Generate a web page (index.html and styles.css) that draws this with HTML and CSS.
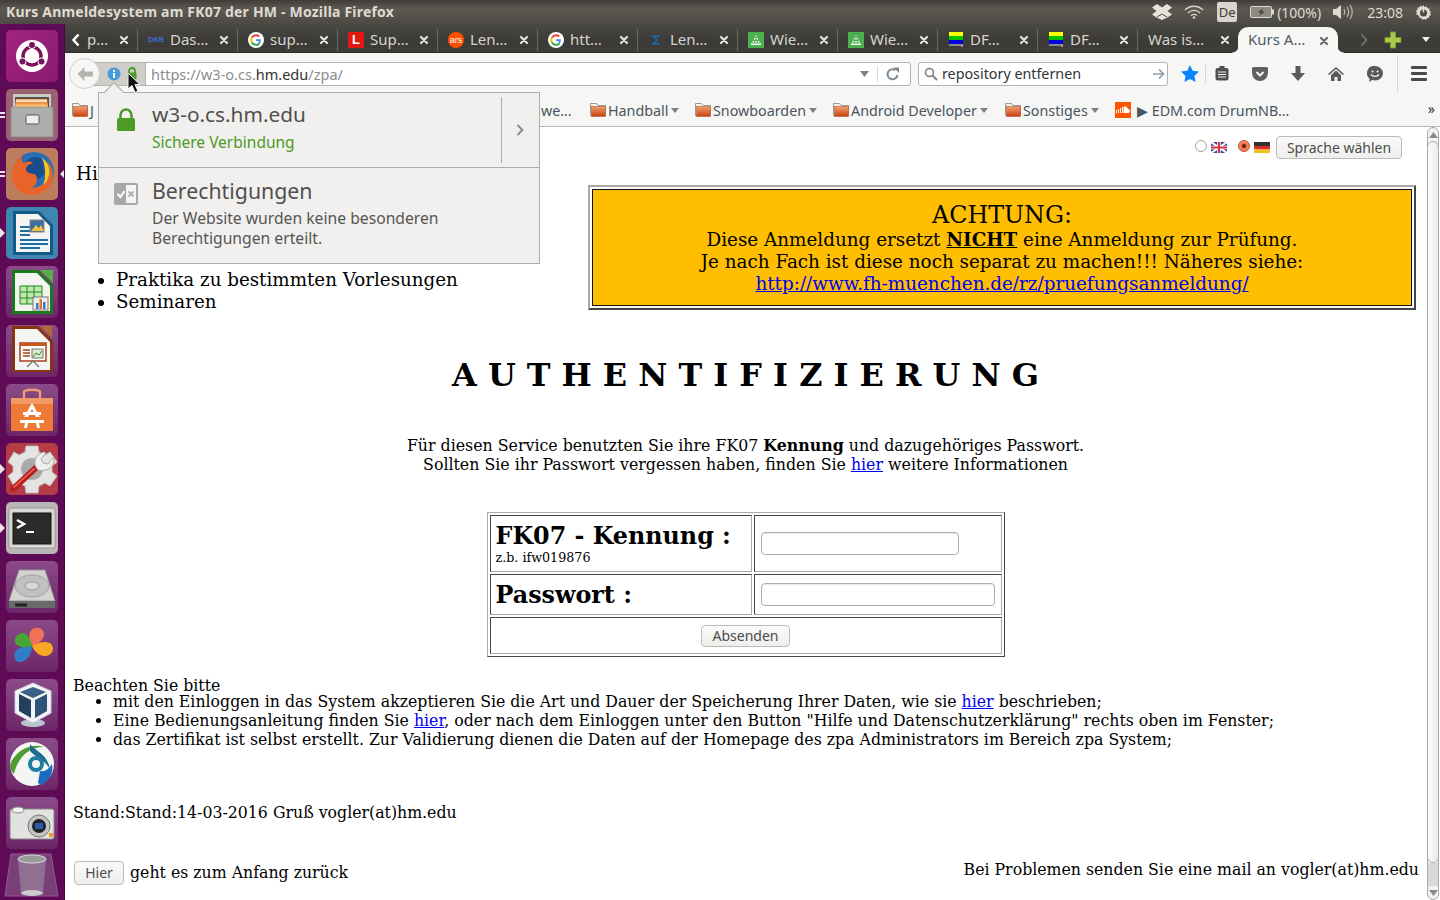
FILE: index.html
```html
<!DOCTYPE html>
<html lang="de">
<head>
<meta charset="utf-8">
<title>Kurs Anmeldesystem am FK07 der HM</title>
<link rel="stylesheet" href="styles.css">
</head>
<body>
<svg class="defs" width="0" height="0" aria-hidden="true">
  <defs>
    <linearGradient id="fold" x1="0" y1="0" x2="0" y2="1"><stop offset="0" stop-color="#f0a070"/><stop offset="1" stop-color="#c8400f"/></linearGradient>
    <symbol id="x" viewBox="0 0 10 10"><path d="M2 2l6 6M8 2l-6 6" stroke="currentColor" stroke-width="2.2" stroke-linecap="round"/></symbol>
    <symbol id="folder" viewBox="0 0 16 16"><path d="M.5 13.5v-12h6l1.5 2h7.5v10z" fill="#f4f2ee" stroke="#9a9690"/><rect x="1.5" y="4.5" width="14" height="10" fill="url(#fold)" stroke="#b8583a" stroke-width=".6"/></symbol>
    <symbol id="g" viewBox="0 0 16 16"><circle cx="8" cy="8" r="8" fill="#fff"/><path d="M8 3.2a4.8 4.8 0 0 1 3.2 1.2" fill="none" stroke="#ea4335" stroke-width="2"/><path d="M3.9 5.6A4.8 4.8 0 0 1 8 3.2" fill="none" stroke="#ea4335" stroke-width="2"/><path d="M3.9 10.4a4.8 4.8 0 0 1 0-4.8" fill="none" stroke="#fbbc05" stroke-width="2"/><path d="M11.5 11.5A4.8 4.8 0 0 1 3.9 10.4" fill="none" stroke="#34a853" stroke-width="2"/><path d="M8 7.2h4.8a4.8 4.8 0 0 1-1.3 4.3l-1.4-1.2c.5-.4.8-.9.9-1.4H8z" fill="#4285f4"/></symbol>
    <symbol id="wie" viewBox="0 0 16 16"><rect width="16" height="16" fill="#4caf50"/><path d="M8 3l1 1.500H7zM6 6h1.500v1.500H6zM8.500 6H10v1.500H8.500zM4.500 9H6v1.500H4.500zM7.200 9h1.600v1.500H7.200zM10 9h1.500v1.500H10zM3 11.500h10V13H3z" fill="#fff"/></symbol>
    <symbol id="df" viewBox="0 0 16 16"><rect x="1" y="0" width="14" height="4" fill="#ffff00"/><rect x="1" y="4" width="14" height="4" fill="#00c000"/><rect x="1" y="8" width="14" height="4" fill="#0000e0"/><rect x="1" y="12" width="14" height="2" fill="#8a8a8a"/><rect x="13" y="12" width="2" height="3" fill="#999"/></symbol>
  </defs>
</svg>

<header class="topbar">
  <span class="wintitle">Kurs Anmeldesystem am FK07 der HM - Mozilla Firefox</span>
  <div class="tray">
    <svg class="tray-dropbox" width="20" height="16" viewBox="0 0 20 16"><path d="M5 0l5 3.500L15 0l5 3.500-4.500 3.500L20 10.500 15.500 13.500 10 16l-5.500-2.500L0 10.500 4.500 7 0 3.500z" fill="#e6e3dc"/><path d="M5 13l5-3 5 3" stroke="#4d4b45" fill="none"/></svg>
    <svg class="tray-wifi" width="20" height="14" viewBox="0 0 20 14"><path d="M1 5c5-5 13-5 18 0M4 8c3.500-3.500 8.500-3.500 12 0M7 10.500c2-1.500 4-1.500 6 0" fill="none" stroke="#d8d5ce" stroke-width="1.400"/><circle cx="10" cy="12.500" r="1.300" fill="#d8d5ce"/></svg>
    <span class="kbd">De</span>
    <svg class="tray-bat" width="24" height="12" viewBox="0 0 24 12"><rect x=".5" y=".5" width="21" height="11" rx="1" fill="#8d8a80" stroke="#dcd9d2"/><rect x="22" y="3.500" width="2" height="5" fill="#dcd9d2"/><path d="M13 2L8 6.500h3.500L9 10l6-4.500h-3.500z" fill="#3a3935"/></svg>
    <span class="pct">(100%)</span>
    <svg class="tray-vol" width="20" height="16" viewBox="0 0 20 16"><path d="M0 5h3l5-4v14l-5-4H0z" fill="#dcd9d2"/><path d="M11 5c1 2 1 4 0 6M14 3c2 3 2 7 0 10M17 1c3 4 3 10 0 14" fill="none" stroke="#bdb9b1" stroke-width="1.200"/></svg>
    <span class="clock">23:08</span>
    <svg class="tray-power" width="17" height="17" viewBox="0 0 17 17"><path d="M8.500 1l1 2 2-.6 1 1.800 2 .3-.3 2 1.800 1-.9 1.900 1 1.700-1.900 1-.2 2-2 0-1 1.800-1.900-.9-1.700.9-1-1.800-2 0-.2-2L1 10.100l.9-1.700L1 6.500l1.800-1-.3-2 2 .1.900-1.800 2 .6z" fill="#dcd9d2"/><circle cx="8.500" cy="9" r="3.500" fill="#4a4842"/><path d="M8.500 3.500v5" stroke="#dcd9d2" stroke-width="1.500"/></svg>
  </div>
</header>

<div class="desktop">
  <nav class="launcher">
    <div class="tile t-ubuntu"><svg viewBox="0 0 52 52"><circle cx="26" cy="26" r="16" fill="#fff"/><circle cx="26" cy="26" r="9" fill="none" stroke="#7b145f" stroke-width="3.500"/><circle cx="26" cy="15" r="3.600" fill="#7b145f" stroke="#fff"/><circle cx="16.500" cy="31.500" r="3.600" fill="#7b145f" stroke="#fff"/><circle cx="35.500" cy="31.500" r="3.600" fill="#7b145f" stroke="#fff"/></svg></div>
    <div class="tile t-files"><i class="pip-l two"></i><svg viewBox="0 0 52 52"><path d="M7 5h38v42H7z" fill="#c9c9c6"/><path d="M5 18h42v30H5z" fill="#aeaeac" stroke="#8a8a88"/><path d="M9 8h34v10H9z" fill="#55534f"/><path d="M10 10h31l1 8H9z" fill="#f4b36a"/><path d="M10 12h31" stroke="#fff"/><path d="M9 14h33" stroke="#e8702a"/><rect x="20" y="26" width="13" height="9" rx="1.500" fill="#eee" stroke="#555"/></svg></div>
    <div class="tile t-fox"><i class="pip-l two"></i><i class="pip-r"></i><svg viewBox="0 0 52 52"><circle cx="28" cy="24" r="20" fill="#2a6fb5"/><circle cx="29" cy="20" r="11" fill="#184d8f"/><path d="M6 27c0-9 4-15 10-19-1 4 0 6 2 7 3-2 7-2 9 0-3 1-7 3-7 6 0 4 5 5 9 5 4 5 2 12-4 14 7 0 15-4 18-11 2-5 1-12-3-16 5 3 7 9 7 14 0 11-9 20-21 20S6 39 6 27z" fill="#e8642a"/><path d="M36 10c6 4 9 11 7 18-1 4-3 7-6 9 3-6 3-17-1-27z" fill="#f9c31e"/></svg></div>
    <div class="tile t-writer"><i class="pip-l"></i><svg viewBox="0 0 52 52"><path d="M7 4h26l14 14v30H7z" fill="#0f5a86"/><path d="M10 7h22l12 12v26H10z" fill="#f4f4f2"/><path d="M14 20h10M14 24h10M14 28h10" stroke="#1a6ea3" stroke-width="2"/><path d="M14 33h28M14 37h28M14 41h20" stroke="#1a6ea3" stroke-width="2"/><rect x="24" y="13" width="14" height="12" fill="#3a6ea0" stroke="#888"/><path d="M25 24l5-6 3 3 2-3 3 6z" fill="#f0c040"/></svg></div>
    <div class="tile t-dim"><svg viewBox="0 0 52 52"><path d="M34 4h13v13z" fill="#55b04a"/><path d="M6 4h26l15 15v29H6z" fill="#1a7a1a"/><path d="M9 7h22l13 13v25H9z" fill="#f4f4f2"/><path d="M14 20h22v18H14z" fill="#bfe7ae" stroke="#1a8a1a"/><path d="M14 26h22M14 32h22M21 20v18M28 20v18" stroke="#1a8a1a"/><rect x="27" y="31" width="15" height="13" fill="#eee" stroke="#777"/><rect x="30" y="37" width="2.500" height="6" fill="#3a7ac0"/><rect x="33.500" y="33" width="2.500" height="10" fill="#e8702a"/><rect x="37" y="36" width="2.500" height="7" fill="#3a7ac0"/></svg></div>
    <div class="tile t-dim"><svg viewBox="0 0 52 52"><path d="M34 1h12v12z" fill="#b06a3a"/><path d="M6 1h26l15 15v31H6z" fill="#8a3310"/><path d="M9 4h22l13 13v28H9z" fill="#f4f4f2"/><rect x="14" y="18" width="26" height="18" fill="#fff" stroke="#a0431a" stroke-width="1.500"/><rect x="14" y="18" width="26" height="3" fill="#c8581f"/><path d="M17 25h7M17 28h7M17 31h7" stroke="#a0431a" stroke-width="1.500"/><rect x="26" y="24" width="11" height="9" fill="#dce8d0" stroke="#777"/><path d="M27 32l3-4 3 2 3-4" stroke="#2a8a2a" fill="none"/><path d="M27 36l-6 6M27 36l6 6" stroke="#777" stroke-width="1.300"/></svg></div>
    <div class="tile t-dim"><svg viewBox="0 0 52 52"><path d="M18 14v-6c0-3 16-3 16 0v6" fill="none" stroke="#e8a070" stroke-width="2.500"/><path d="M5 14h42v33H5z" fill="#ee7a36"/><path d="M5 14h42v6H5z" fill="#f19a62"/><path d="M26 19l8 14h-4l-4-8-4 8h-4z" fill="#fff"/><path d="M17 28h18v3H17zM14 36h24v3H14z" fill="#fff"/><path d="M19 39l-1 5h3l1-5zM33 39l1 5h-3l-1-5z" fill="#fff"/></svg></div>
    <div class="tile t-settings"><i class="pip-l"></i><svg viewBox="0 0 52 52"><path d="M20 3h12l1 6 6 3 5-3 7 10-5 4v6l5 4-7 10-5-3-6 3-1 7H20l-1-7-6-3-5 3L2 33l5-4v-6L2 19 8 9l5 3 6-3z" fill="#e4e4e2" stroke="#bbb"/><circle cx="26" cy="26" r="11" fill="#a9a9a7"/><path d="M7 46l26-24" stroke="#b81f1f" stroke-width="6" stroke-linecap="round"/><path d="M8 44l20-18" stroke="#ea6a5a" stroke-width="1.500" stroke-linecap="round"/><path d="M30 24c-3-6 0-13 8-15l2 1-5 6 2 4 5 1 5-6 1 2c0 8-8 12-16 10z" fill="#efefed" stroke="#aaa"/></svg></div>
    <div class="tile t-term"><i class="pip-l"></i><svg viewBox="0 0 52 52"><rect x="3" y="6" width="46" height="40" rx="2" fill="#d9d9d7" stroke="#999"/><rect x="7" y="11" width="38" height="31" fill="#2b2b2b" stroke="#111"/><path d="M11 18l7 4-7 4" fill="none" stroke="#fff" stroke-width="2.500"/><path d="M20 30h8" stroke="#fff" stroke-width="2"/></svg></div>
    <div class="tile t-dim"><svg viewBox="0 0 52 52"><path d="M13 9h26l10 31H3z" fill="#d2d2d0" stroke="#999"/><ellipse cx="26" cy="25" rx="17" ry="11" fill="#c0c0be" stroke="#a2a2a0"/><ellipse cx="26" cy="25" rx="7" ry="4" fill="#d8d8d6" stroke="#999"/><path d="M3 40h46v7H3z" fill="#6a6a68"/><path d="M9 44h12" stroke="#222" stroke-width="3"/></svg></div>
    <div class="tile t-dim"><svg viewBox="0 0 52 52"><path d="M26 26C22 18 22 10 29 8c5-1 9 2 9 6 0 6-6 10-12 12z" fill="#f2715a"/><path d="M26 26c8-4 16-6 20-1 3 5-1 11-7 11-6 0-11-5-13-10z" fill="#f9a825"/><path d="M26 26c0 7-4 15-11 16-6 1-8-6-6-10 3-5 10-6 17-6z" fill="#2f7dc4"/><path d="M26 26C20 28 11 28 9 22c-1-6 4-9 8-9 5 1 8 7 9 13z" fill="#46a638"/></svg></div>
    <div class="tile t-dim"><svg viewBox="0 0 52 52"><ellipse cx="27" cy="44" rx="12" ry="4" fill="#b9c4cf"/><path d="M21 36h12v7H21z" fill="#cfd5dc"/><path d="M27 4l18 8v22l-18 10L9 34V12z" fill="#f2f4f6" stroke="#ccd"/><path d="M13 15l12 6v18l-12-7z" fill="#24405f"/><path d="M29 21l12-6v17l-12 7z" fill="#2f5378"/><path d="M27 8l13 5-13 6-13-6z" fill="#3b5f85"/></svg></div>
    <div class="tile t-dim"><svg viewBox="0 0 52 52"><circle cx="26" cy="26" r="22" fill="#f4f6f4"/><path d="M4 27C8 14 24 4 38 9 25 8 12 18 8 36c-3-3-4-6-4-9z" fill="#4f9a33"/><path d="M24 6c6 8 18 10 20 26-4-10-14-12-20-19z" fill="#1f6e8f"/><path d="M46 26c2 10-4 18-11 21l-3-2 2-12c5 1 9-2 12-7z" fill="#1a6bbd"/><circle cx="30" cy="26" r="6" fill="none" stroke="#1f7da0" stroke-width="4"/></svg></div>
    <div class="tile t-dim"><svg viewBox="0 0 52 52"><rect x="4" y="12" width="44" height="30" rx="2" fill="#e2e2e0" stroke="#888"/><ellipse cx="12" cy="13" rx="6" ry="3" fill="#f2f2f0" stroke="#888"/><circle cx="33" cy="29" r="11" fill="#c4c4c2" stroke="#777"/><circle cx="33" cy="29" r="7" fill="#222"/><rect x="29" y="26" width="8" height="6" fill="#2a5aa8"/><rect x="43" y="36" width="4" height="4" fill="#f09a20"/></svg></div>
    <div class="trash"><svg viewBox="0 0 52 50"><path d="M5 3h40l7 42H-1z" fill="#7a3f78" stroke="#8f5a8c"/><path d="M12 8h28l-3 34H15z" fill="#8f7090"/><ellipse cx="26" cy="8" rx="14" ry="4" fill="#9a9a9a" stroke="#ddd"/><ellipse cx="26" cy="42" rx="11" ry="3" fill="#ccc"/></svg></div>
  </nav>

  <div class="browser">
    <div class="tabstrip">
      <svg class="tab-arrow" width="10" height="14" viewBox="0 0 10 14"><path d="M7.500 1.500L2.500 7l5 5.500" fill="none" stroke="#fff" stroke-width="2.500"/></svg>
      <div class="tab tab-first"><span class="tt">p…</span><svg class="cl"><use href="#x"/></svg></div>
      <div class="tab"><span class="fav dkb">DKB</span><span class="tt">Das…</span><svg class="cl"><use href="#x"/></svg></div>
      <div class="tab"><svg class="fav"><use href="#g"/></svg><span class="tt">sup…</span><svg class="cl"><use href="#x"/></svg></div>
      <div class="tab"><span class="fav lfav">L</span><span class="tt">Sup…</span><svg class="cl"><use href="#x"/></svg></div>
      <div class="tab"><span class="fav ars">ars</span><span class="tt">Len…</span><svg class="cl"><use href="#x"/></svg></div>
      <div class="tab"><svg class="fav"><use href="#g"/></svg><span class="tt">htt…</span><svg class="cl"><use href="#x"/></svg></div>
      <div class="tab"><svg class="fav" viewBox="0 0 16 16"><path d="M12 4H5L9 8l-4 4h7" fill="none" stroke="#1070c0" stroke-width="1.300"/></svg><span class="tt">Len…</span><svg class="cl"><use href="#x"/></svg></div>
      <div class="tab"><svg class="fav"><use href="#wie"/></svg><span class="tt">Wie…</span><svg class="cl"><use href="#x"/></svg></div>
      <div class="tab"><svg class="fav"><use href="#wie"/></svg><span class="tt">Wie…</span><svg class="cl"><use href="#x"/></svg></div>
      <div class="tab"><svg class="fav"><use href="#df"/></svg><span class="tt">DF…</span><svg class="cl"><use href="#x"/></svg></div>
      <div class="tab"><svg class="fav"><use href="#df"/></svg><span class="tt">DF…</span><svg class="cl"><use href="#x"/></svg></div>
      <div class="tab tab-plain"><span class="tt">Was is…</span><svg class="cl"><use href="#x"/></svg></div>
      <div class="tab tab-active"><span class="tt">Kurs A…</span><svg class="cl"><use href="#x"/></svg></div>
      <svg class="strip-next" width="10" height="14" viewBox="0 0 10 14"><path d="M2.500 1.500L7.500 7l-5 5.500" fill="none" stroke="#77756e" stroke-width="1.800"/></svg>
      <svg class="strip-plus" width="18" height="18" viewBox="0 0 18 18"><path d="M6.500 1h5v5.500H17v5h-5.500V17h-5v-5.500H1v-5h5.500z" fill="#a8c850" stroke="#78982e"/></svg>
      <svg class="strip-drop" width="10" height="6" viewBox="0 0 10 6"><path d="M1 0h8L5 5z" fill="#f2f2f2"/></svg>
    </div>

    <div class="navbar">
      <button class="backbtn" aria-label="Zurück"><svg width="18" height="16" viewBox="0 0 18 16"><path d="M8.500 1L1.500 8l7 7V10.500H17v-5H8.500z" fill="#b3b3b0"/></svg></button>
      <div class="urlbar">
        <div class="identity">
          <svg width="14" height="14" viewBox="0 0 14 14"><circle cx="7" cy="7" r="6.500" fill="#4a9bdc"/><rect x="6" y="6" width="2" height="5" fill="#fff"/><rect x="6" y="3" width="2" height="2" fill="#fff"/></svg>
          <svg width="10" height="13" viewBox="0 0 10 13"><path d="M2 6V4a3 3 0 0 1 6 0v2" fill="none" stroke="#4d9a26" stroke-width="1.800"/><rect x=".5" y="5.500" width="9" height="7" rx="1" fill="#4d9a26"/></svg>
        </div>
        <span class="url"><span class="u-dim">https://w3-o.cs.</span>hm.edu<span class="u-dim">/zpa/</span></span>
        <svg class="url-drop" width="9" height="6" viewBox="0 0 9 6"><path d="M0 0h9L4.500 6z" fill="#808080"/></svg>
        <span class="url-sep"></span>
        <svg class="url-reload" width="14" height="14" viewBox="0 0 14 14"><path d="M11.500 8a5 5 0 1 1-2-4.800" fill="none" stroke="#7c8a96" stroke-width="2"/><path d="M7.500 .5h5.500v5.500z" fill="#7c8a96"/></svg>
      </div>
      <div class="searchbar">
        <svg width="14" height="14" viewBox="0 0 14 14"><circle cx="5.500" cy="5.500" r="4" fill="none" stroke="#808080" stroke-width="1.600"/><path d="M8.500 8.500l4.500 4.500" stroke="#808080" stroke-width="2"/></svg>
        <span class="s-text">repository entfernen</span>
        <svg class="s-go" width="12" height="12" viewBox="0 0 12 12"><path d="M0 6h10M6 1.500L10.500 6 6 10.500" fill="none" stroke="#8a9aa8" stroke-width="1.600"/></svg>
      </div>
      <div class="tools">
        <svg class="i-star" width="18" height="17" viewBox="0 0 18 17"><path d="M9 0l2.700 5.800 6.300.8-4.600 4.300 1.200 6.100L9 14l-5.600 3 1.200-6.100L0 6.600l6.300-.8z" fill="#0a84ff"/></svg>
        <span class="t-sep"></span>
        <svg class="i-clip" width="14" height="15" viewBox="0 0 14 15"><rect x=".5" y="2" width="13" height="12.500" rx="2" fill="#4f4f4f"/><rect x="4.500" y="0" width="5" height="3" fill="#4f4f4f"/><path d="M3 6h8M3 8.500h8M3 11h8" stroke="#f6f6f5" stroke-width="1.200"/></svg>
        <svg class="i-pocket" width="16" height="14" viewBox="0 0 16 14"><path d="M1.500 0h13A1.500 1.500 0 0 1 16 1.500V6A8 8 0 0 1 0 6V1.500A1.500 1.500 0 0 1 1.500 0z" fill="#5f5f5f"/><path d="M4.500 5l3.500 3.500L11.500 5" fill="none" stroke="#f6f6f5" stroke-width="2"/></svg>
        <svg class="i-down" width="14" height="15" viewBox="0 0 14 15"><path d="M4.500 0h5v7H14l-7 8-7-8h4.500z" fill="#5a5a5a"/></svg>
        <svg class="i-home" width="16" height="14" viewBox="0 0 16 14"><path d="M8 0l8 7-1 1-7-6-7 6-1-1z" fill="#5a5a5a"/><path d="M3 8l5-4.500L13 8v6H9.500V10h-3v4H3z" fill="#5a5a5a"/></svg>
        <svg class="i-smile" width="16" height="16" viewBox="0 0 16 16"><path d="M8 0a8 7.300 0 0 1 0 14.600c-1 0-2-.2-2.800-.5L2 16l.6-3.300A7.200 7.200 0 0 1 8 0z" fill="#5a5a5a"/><circle cx="5.500" cy="5.500" r="1" fill="#f6f6f5"/><circle cx="10.500" cy="5.500" r="1" fill="#f6f6f5"/><path d="M4 8.500c2 2.500 6 2.500 8 0" fill="none" stroke="#f6f6f5" stroke-width="1.300"/></svg>
        <span class="t-sep tall"></span>
        <span class="i-menu"><i></i><i></i><i></i></span>
      </div>
    </div>

    <div class="bookmarks">
      <span class="bm bm-j"><svg class="f16"><use href="#folder"/></svg>J</span>
      <span class="bm bm-we">we…</span>
      <span class="bm bm-hand"><svg class="f16"><use href="#folder"/></svg>Handball<i class="caret"></i></span>
      <span class="bm bm-snow"><svg class="f16"><use href="#folder"/></svg>Snowboarden<i class="caret"></i></span>
      <span class="bm bm-and"><svg class="f16"><use href="#folder"/></svg>Android Developer<i class="caret"></i></span>
      <span class="bm bm-son"><svg class="f16"><use href="#folder"/></svg>Sonstiges<i class="caret"></i></span>
      <span class="bm bm-edm"><svg width="16" height="16" viewBox="0 0 16 16"><rect width="16" height="16" fill="#ff5500"/><path d="M1.500 11V8M3.500 11V7M5.500 11V6M7.500 11V5" stroke="#fff"/><path d="M8.500 11V5c2-1 4 0 4.500 2 1.500 0 2 1 2 2s-1 2-2 2z" fill="#fff"/></svg>▶ EDM.com DrumNB…</span>
      <span class="bm-more">»</span>
    </div>

    <div class="viewport">
      <main class="page">
        <form class="lang">
          <span class="radio"></span>
          <svg class="flag" width="16" height="11" viewBox="0 0 16 11"><rect width="16" height="11" fill="#3a4a9a"/><path d="M0 0l16 11M16 0L0 11" stroke="#fff" stroke-width="2"/><path d="M8 0v11M0 5.500h16" stroke="#fff" stroke-width="3.500"/><path d="M8 0v11M0 5.500h16" stroke="#d8303a" stroke-width="2"/></svg>
          <span class="radio on"></span>
          <svg class="flag" width="16" height="11" viewBox="0 0 16 11"><rect width="16" height="4" fill="#333"/><rect y="4" width="16" height="3.500" fill="#d8302a"/><rect y="7.500" width="16" height="3.500" fill="#f0c020"/></svg>
          <button class="btn btn-lang" type="button">Sprache wählen</button>
        </form>

        <section class="intro">
          <div class="intro-left">
            <p class="hi">Hi</p>
            <ul class="offer">
              <li>Praktika zu bestimmten Vorlesungen</li>
              <li>Seminaren</li>
            </ul>
          </div>
          <table class="notice">
            <tr><td>
              <div class="n-head">ACHTUNG:</div>
              Diese Anmeldung ersetzt <b class="u">NICHT</b> eine Anmeldung zur Prüfung.<br>
              Je nach Fach ist diese noch separat zu machen!!! Näheres siehe:<br>
              <a href="#">http://www.fh-muenchen.de/rz/pruefungsanmeldung/</a>
            </td></tr>
          </table>
        </section>

        <h1 class="auth">A U T H E N T I F I Z I E R U N G</h1>

        <p class="lead">Für diesen Service benutzten Sie ihre FK07 <b>Kennung</b> und dazugehöriges Passwort.<br>Sollten Sie ihr Passwort vergessen haben, finden Sie <a href="#">hier</a> weitere Informationen</p>

        <table class="login">
          <tr class="r1">
            <td class="c1"><b class="big">FK07 - Kennung :</b><span class="small">z.b. ifw019876</span></td>
            <td class="c2"><input class="inp i1" type="text"></td>
          </tr>
          <tr class="r2">
            <td class="c1"><b class="big">Passwort :</b></td>
            <td class="c2"><input class="inp i2" type="password"></td>
          </tr>
          <tr class="r3">
            <td colspan="2" class="send"><button class="btn btn-send" type="button">Absenden</button></td>
          </tr>
        </table>

        <div class="notes">
          Beachten Sie bitte
          <ul>
            <li>mit den Einloggen in das System akzeptieren Sie die Art und Dauer der Speicherung Ihrer Daten, wie sie <a href="#">hier</a> beschrieben;</li>
            <li>Eine Bedienungsanleitung finden Sie <a href="#">hier</a>, oder nach dem Einloggen unter den Button "Hilfe und Datenschutzerklärung" rechts oben im Fenster;</li>
            <li>das Zertifikat ist selbst erstellt. Zur Validierung dienen die Daten auf der Homepage des zpa Administrators im Bereich zpa System;</li>
          </ul>
        </div>

        <p class="stand">Stand:Stand:14-03-2016 Gruß vogler(at)hm.edu</p>

        <div class="foot">
          <div class="foot-l"><button class="btn btn-hier" type="button">Hier</button><span class="foot-txt">geht es zum Anfang zurück</span></div>
          <div class="foot-r">Bei Problemen senden Sie eine mail an vogler(at)hm.edu</div>
        </div>
      </main>
      <div class="scrollbar">
        <div class="sb-track">
          <div class="sb-btn"><svg width="9" height="6" viewBox="0 0 9 6"><path d="M4.500 0L9 6H0z" fill="#8a8a86"/></svg></div>
          <div class="thumb"></div>
          <div class="sb-rest"></div>
          <div class="sb-btn"><svg width="9" height="6" viewBox="0 0 9 6"><path d="M4.500 6L0 0h9z" fill="#8a8a86"/></svg></div>
        </div>
      </div>
    </div>

    <aside class="popup">
      <span class="popup-arrow"></span>
      <div class="pop-top">
        <svg class="pop-lock" width="20" height="24" viewBox="0 0 20 24"><path d="M4.500 11V7a5.500 5.500 0 0 1 11 0v4" fill="none" stroke="#4d9a26" stroke-width="2.500"/><rect x="1" y="10" width="18" height="13" rx="1.500" fill="#4d9a26"/></svg>
        <div class="pop-main">
          <div class="pop-title t-host">w3-o.cs.hm.edu</div>
          <div class="pop-sec">Sichere Verbindung</div>
        </div>
        <div class="pop-more"><svg width="8" height="12" viewBox="0 0 8 12"><path d="M1.500 1L6.500 6l-5 5" fill="none" stroke="#888" stroke-width="1.800"/></svg></div>
      </div>
      <div class="pop-bottom">
        <svg class="pop-perm" width="24" height="22" viewBox="0 0 24 22"><rect width="24" height="22" rx="2" fill="#a8a8a8"/><rect x="12" y="2" width="10" height="18" fill="#f4f4f2"/><path d="M3.500 11l3 3 4-6" fill="none" stroke="#fff" stroke-width="2"/><path d="M14.500 8.500l5 5M19.500 8.500l-5 5" stroke="#b0b0b0" stroke-width="1.800"/></svg>
        <div class="pop-main">
          <div class="pop-title">Berechtigungen</div>
          <div class="pop-text">Der Website wurden keine besonderen<br>Berechtigungen erteilt.</div>
        </div>
      </div>
    </aside>
    <svg class="cursor" width="14" height="22" viewBox="0 0 14 22"><path d="M1 1v16l4-3.500 3 7 3-1.300-3-6.700h5z" fill="#111" stroke="#fff"/></svg>
  </div>
</div>
</body>
</html>
```

FILE: styles.css
```css
* { box-sizing: border-box; }
html, body { margin: 0; padding: 0; width: 1440px; height: 900px; overflow: hidden; }
body { font-family: "DejaVu Serif", serif; color: #000; background: #fff; display: flex; flex-direction: column; }
.defs { position: absolute; }
a { color: #0000ee; }

/* top panel */
.topbar { height: 24px; flex: none; display: flex; align-items: center; justify-content: space-between; padding: 0 8px 0 6px; background: linear-gradient(#3f3d38 0, #5b5950 35%, #4c4a44 100%); font-family: "Noto Sans", sans-serif; color: #dfdbd2; }
.wintitle { font-size: 14px; font-weight: 700; letter-spacing: .2px; margin-top: -2px; }
.tray { display: flex; align-items: center; font-size: 14px; }
.tray-dropbox { margin-right: 12px; }
.tray-wifi { margin-right: 13px; }
.kbd { width: 20px; height: 20px; margin-right: 13px; background: #d9d6cf; color: #3c3b37; border-radius: 2px; font-size: 13px; text-align: center; line-height: 20px; }
.tray-bat { margin-right: 3px; }
.pct { margin-right: 12px; }
.tray-vol { margin-right: 14px; }
.clock { margin-right: 12px; }

/* desktop */
.desktop { flex: 1; display: flex; min-height: 0; }
.launcher { width: 65px; flex: none; background: #5f0a54; border-right: 1px solid #4a0742; padding: 6px 0 0 6px; display: flex; flex-direction: column; gap: 7px; overflow: hidden; }
.tile { position: relative; width: 52px; height: 52px; flex: none; border-radius: 5px; }
.tile svg { display: block; width: 52px; height: 52px; }
.t-ubuntu { background: linear-gradient(135deg, #a0247f, #8c1a70); }
.t-files { background: #9c6272; }
.t-fox { background: #bb7d5e; }
.t-writer { background: #3f86b0; }
.t-dim { background: linear-gradient(#8a4b88, #6d2668); }
.t-settings { background: #b53c46; }
.t-term { background: #b9b5b9; }
.trash { width: 52px; height: 50px; flex: none; margin-top: -5px; }
.trash svg { display: block; width: 52px; height: 50px; overflow: visible; }
.pip-l { position: absolute; left: -6px; top: 21px; width: 0; height: 0; border: 5px solid transparent; border-left: 5px solid #e8e4e8; border-right: 0; }
.pip-l.two { width: 5px; height: 2px; border: 0; background: #e8e4e8; top: 23px; box-shadow: 0 4px 0 #e8e4e8; }
.pip-r { position: absolute; right: -7px; top: 21px; width: 0; height: 0; border: 5px solid transparent; border-right: 5px solid #e8e4e8; border-left: 0; }

/* browser */
.browser { flex: 1; min-width: 0; display: flex; flex-direction: column; position: relative; font-family: "Noto Sans", sans-serif; }
.tabstrip { height: 29px; flex: none; display: flex; align-items: center; padding-top: 4px; background: linear-gradient(#4a4842, #3c3b37 60%); border-bottom: 1px solid #2c2b28; color: #d8d5ce; font-size: 15px; }
.tab-arrow { margin-left: 6px; margin-right: 4px; flex: none; }
.tab { width: 100px; height: 22px; flex: none; display: flex; align-items: center; padding-left: 10px; position: relative; border-right: 1px solid #6b6963; }
.tab-first { width: 53px; padding-left: 2px; }
.fav { width: 16px; height: 16px; flex: none; margin-right: 6px; display: block; }
.tt { white-space: nowrap; margin-top: -2px; }
.cl { position: absolute; right: 8px; top: 6px; width: 10px; height: 10px; color: #e4e2dc; }
.dkb { color: #3f6fd0; font: 700 7.5px/16px "Liberation Sans", sans-serif; text-align: center; }
.lfav { background: #e01a10; color: #fff; font: 700 13px/16px "Liberation Sans", sans-serif; text-align: center; }
.ars { background: #ff4e00; color: #fff; border-radius: 50%; font: 9px/16px "Liberation Sans", sans-serif; text-align: center; }
.tab-plain { padding-left: 10px; border-right: 0; }
.tab-active { background: #f6f6f5; color: #4c5a6a; border: 0; width: 100px; height: 27px; border-radius: 10px 10px 0 0; padding-left: 10px; }
.tab-active::before, .tab-active::after { content: ""; position: absolute; bottom: 0; width: 6px; height: 8px; }
.tab-active::before { left: -6px; background: radial-gradient(circle at 0 0, transparent 6px, #f6f6f5 7px); }
.tab-active::after { right: -6px; background: radial-gradient(circle at 100% 0, transparent 6px, #f6f6f5 7px); }
.tab-active .cl { color: #6a6a66; right: 9px; top: 9px; }
.strip-next { margin-left: 21px; flex: none; }
.strip-plus { margin-left: 15px; flex: none; }
.strip-drop { margin-left: 19px; flex: none; }

.navbar { height: 43px; flex: none; display: flex; align-items: center; background: #f6f6f5; padding: 0 0 2px 4px; }
.backbtn { width: 31px; height: 31px; flex: none; border-radius: 50%; border: 1px solid #cfcfcc; background: #f6f6f5; position: relative; z-index: 1; padding: 0; display: flex; align-items: center; justify-content: center; }
.urlbar { width: 819px; height: 24px; margin-left: -8px; flex: none; display: flex; align-items: center; border: 1px solid #b5b3ae; border-radius: 0 3px 3px 0; background: #fff; font-size: 14.500px; padding-right: 10px; }
.identity { width: 53px; height: 22px; flex: none; display: flex; align-items: center; gap: 6px; padding-left: 14px; background: #cfcecb; border-right: 1px solid #b5b3ae; }
.url { flex: 1; padding-left: 5px; color: #333; white-space: nowrap; }
.u-dim { color: #8c8c8c; }
.url-drop { margin-right: 8px; }
.url-sep { width: 1px; height: 16px; background: #d8d8d6; margin-right: 8px; }
.searchbar { width: 250px; height: 24px; margin-left: 7px; flex: none; display: flex; align-items: center; border: 1px solid #b5b3ae; border-radius: 3px; background: #fff; padding: 0 2px 0 5px; font-size: 14.300px; color: #333; }
.s-text { flex: 1; padding-left: 4px; white-space: nowrap; }
.tools { display: flex; align-items: center; flex: none; margin-left: 13px; }
.t-sep { width: 1px; height: 18px; background: #d6d6d3; margin: 0 9px 0 6px; }
.t-sep.tall { height: 36px; margin: 0 13px 0 14px; }
.i-pocket { margin-left: 23px; }
.i-down { margin-left: 23px; }
.i-home { margin-left: 23px; }
.i-smile { margin-left: 23px; }
.i-menu { display: flex; flex-direction: column; gap: 3px; width: 16px; }
.i-menu i { display: block; height: 3px; background: #4a4a4a; border-radius: 1px; }

.bookmarks { height: 31px; flex: none; display: flex; align-items: center; background: #f6f6f5; border-bottom: 1px solid #b8b6b0; font-size: 14.300px; color: #4a5460; padding-bottom: 2px; position: relative; }
.bm { display: flex; align-items: center; white-space: nowrap; flex: none; }
.bm svg { flex: none; }
.f16 { width: 16px; height: 16px; margin-right: 2px; }
.bm-j { margin-left: 7px; width: 469px; }
.bm-we { width: 49px; }
.bm-hand { width: 105px; }
.bm-snow { width: 138px; }
.bm-and { width: 172px; }
.bm-son { width: 110px; }
.bm-edm svg { margin-right: 6px; }
.bm-more { position: absolute; right: 5px; top: 3px; font-size: 14px; color: #333; }
.caret { width: 0; height: 0; margin-left: 3px; border: 4px solid transparent; border-top: 5px solid #808080; border-bottom: 0; }

.viewport { flex: 1; min-height: 0; display: flex; background: #fff; }
.page { flex: 1; min-width: 0; display: flex; flex-direction: column; overflow: hidden; font-family: "DejaVu Serif", serif; font-size: 15.750px; }
.scrollbar { width: 14px; flex: none; padding: 0 1px 0 1px; background: #fff; display: flex; }
.sb-track { flex: 1; display: flex; flex-direction: column; border: 1px solid #a9a9a5; border-radius: 7px; overflow: hidden; background: #f3f3f2; }
.sb-btn { height: 13px; flex: none; display: flex; align-items: center; justify-content: center; }
.thumb { flex: 1; margin: 0 -1px; background: linear-gradient(90deg, #fbfbfb, #ebebe9); border: 1px solid #a9a9a5; border-radius: 7px; }
.sb-rest { height: 23px; flex: none; background: #d9d9d7; }

.lang { display: flex; align-items: center; justify-content: flex-end; height: 23px; margin-top: 9px; padding-right: 24px; }
.radio { width: 12px; height: 12px; border-radius: 50%; background: #fff; border: 1px solid #a5a5a2; margin-top: -3px; }
.radio.on { background: #e8663a; box-shadow: inset 0 0 0 2px #f0885f; border-color: #c9573a; }
.radio.on::after { content: ""; display: block; width: 4px; height: 4px; margin: 3px; background: #5a2a1a; border-radius: 50%; }
.flag { margin: 0 11px 0 4px; }
.flag:nth-of-type(2) { margin-right: 6px; }
.btn { font-family: "Noto Sans", sans-serif; font-size: 14px; color: #4c4c4c; border: 1px solid #bdbbb6; border-radius: 4px; background: linear-gradient(#fafafa, #eeeeec); padding: 0; }
.btn-lang { width: 126px; height: 23px; }

.intro { display: flex; justify-content: space-between; align-items: flex-start; margin-top: 3px; height: 148px; }
.intro-left { padding: 1px 0 0 11px; font-size: 18.300px; line-height: 22px; }
.hi { margin: 0 0 84px; white-space: nowrap; }
.offer { margin: 0; padding-left: 40px; white-space: nowrap; }
.notice { margin: 23px 10px 0 0; width: 828px; height: 125px; border: 2px solid; border-color: #aaa #444 #444 #aaa; border-spacing: 2px; font-size: 18.350px; line-height: 22px; text-align: center; }
.notice td { background: #ffbf00; border: 1px solid #111; padding: 11px 0 0; vertical-align: top; }
.n-head { font-size: 23.800px; line-height: 28px; }
.u { text-decoration: underline; }

.auth { margin: 46px 0 0; font-size: 31.900px; line-height: 38px; text-align: center; white-space: nowrap; }
.lead { margin: 42px 0 0; font-size: 15.800px; line-height: 19px; text-align: center; }

.login { margin: 38px auto 0; width: 518px; height: 145px; border: 1px solid; border-color: #aaa #444 #444 #aaa; border-spacing: 2px; }
.login td { border: 1px solid; border-color: #444 #aaa #aaa #444; padding: 0 6px; }
.login .c1 { padding-left: 5px; width: 263px; }
.r1 { height: 57px; }
.r2 { height: 41px; }
.r3 { height: 37px; }
.big { font-size: 23.800px; line-height: 28px; white-space: nowrap; display: block; }
.small { font-size: 12.700px; line-height: 16px; display: block; }
.inp { display: block; height: 23px; border: 1px solid #b0aea8; border-radius: 4px; background: #fff; padding: 0; box-shadow: inset 0 1px 1px #e8e8e6; }
.i1 { width: 198px; }
.i2 { width: 234px; }
.send { text-align: center; }
.btn-send { display: block; margin: 0 auto; width: 89px; height: 22px; }

.notes { margin: 19px 0 0 8px; line-height: 19px; }
.notes ul { margin: -3px 0 0; padding-left: 40px; white-space: nowrap; }
.stand { margin: 54px 0 0 8px; line-height: 19px; }

.foot { display: flex; justify-content: space-between; margin: 39px 7px 0 9px; }
.foot-l { display: flex; align-items: center; gap: 6px; }
.foot-txt { margin-top: -2px; }
.foot-r { margin-top: -1px; }
.btn-hier { width: 50px; height: 24px; padding-bottom: 1px; }

/* identity popup */
.popup { position: absolute; left: 33px; top: 68px; width: 442px; height: 172px; z-index: 2; background: #f1f0ee; border: 1px solid #aeaca7; color: #555; }
.popup-arrow { position: absolute; left: 8px; top: -8px; width: 14px; height: 14px; background: #f1f0ee; border-left: 1px solid #aeaca7; border-top: 1px solid #aeaca7; transform: rotate(45deg); }
.pop-top { height: 75px; border-bottom: 1px solid #aeaca7; display: flex; }
.pop-lock { margin: 15px 0 0 17px; flex: none; }
.pop-main { margin-left: 16px; flex: 1; }
.pop-title { font-size: 21.300px; line-height: 28px; color: #505050; white-space: nowrap; }
.t-host { font-size: 20.800px; }
.pop-top .pop-main { padding-top: 7px; }
.pop-sec { font-size: 15.500px; line-height: 24px; margin-top: 2px; color: #4d9a26; }
.pop-more { width: 38px; margin: 4px 0; padding-right: 2px; flex: none; border-left: 1px solid #aeaca7; display: flex; align-items: center; justify-content: center; }
.pop-bottom { display: flex; padding-top: 9px; }
.pop-perm { margin: 6px 0 0 15px; flex: none; }
.pop-bottom .pop-main { margin-left: 14px; }
.pop-text { font-size: 15.700px; line-height: 20px; margin-top: 3px; }
.cursor { position: absolute; left: 62px; top: 48px; z-index: 3; }
```
